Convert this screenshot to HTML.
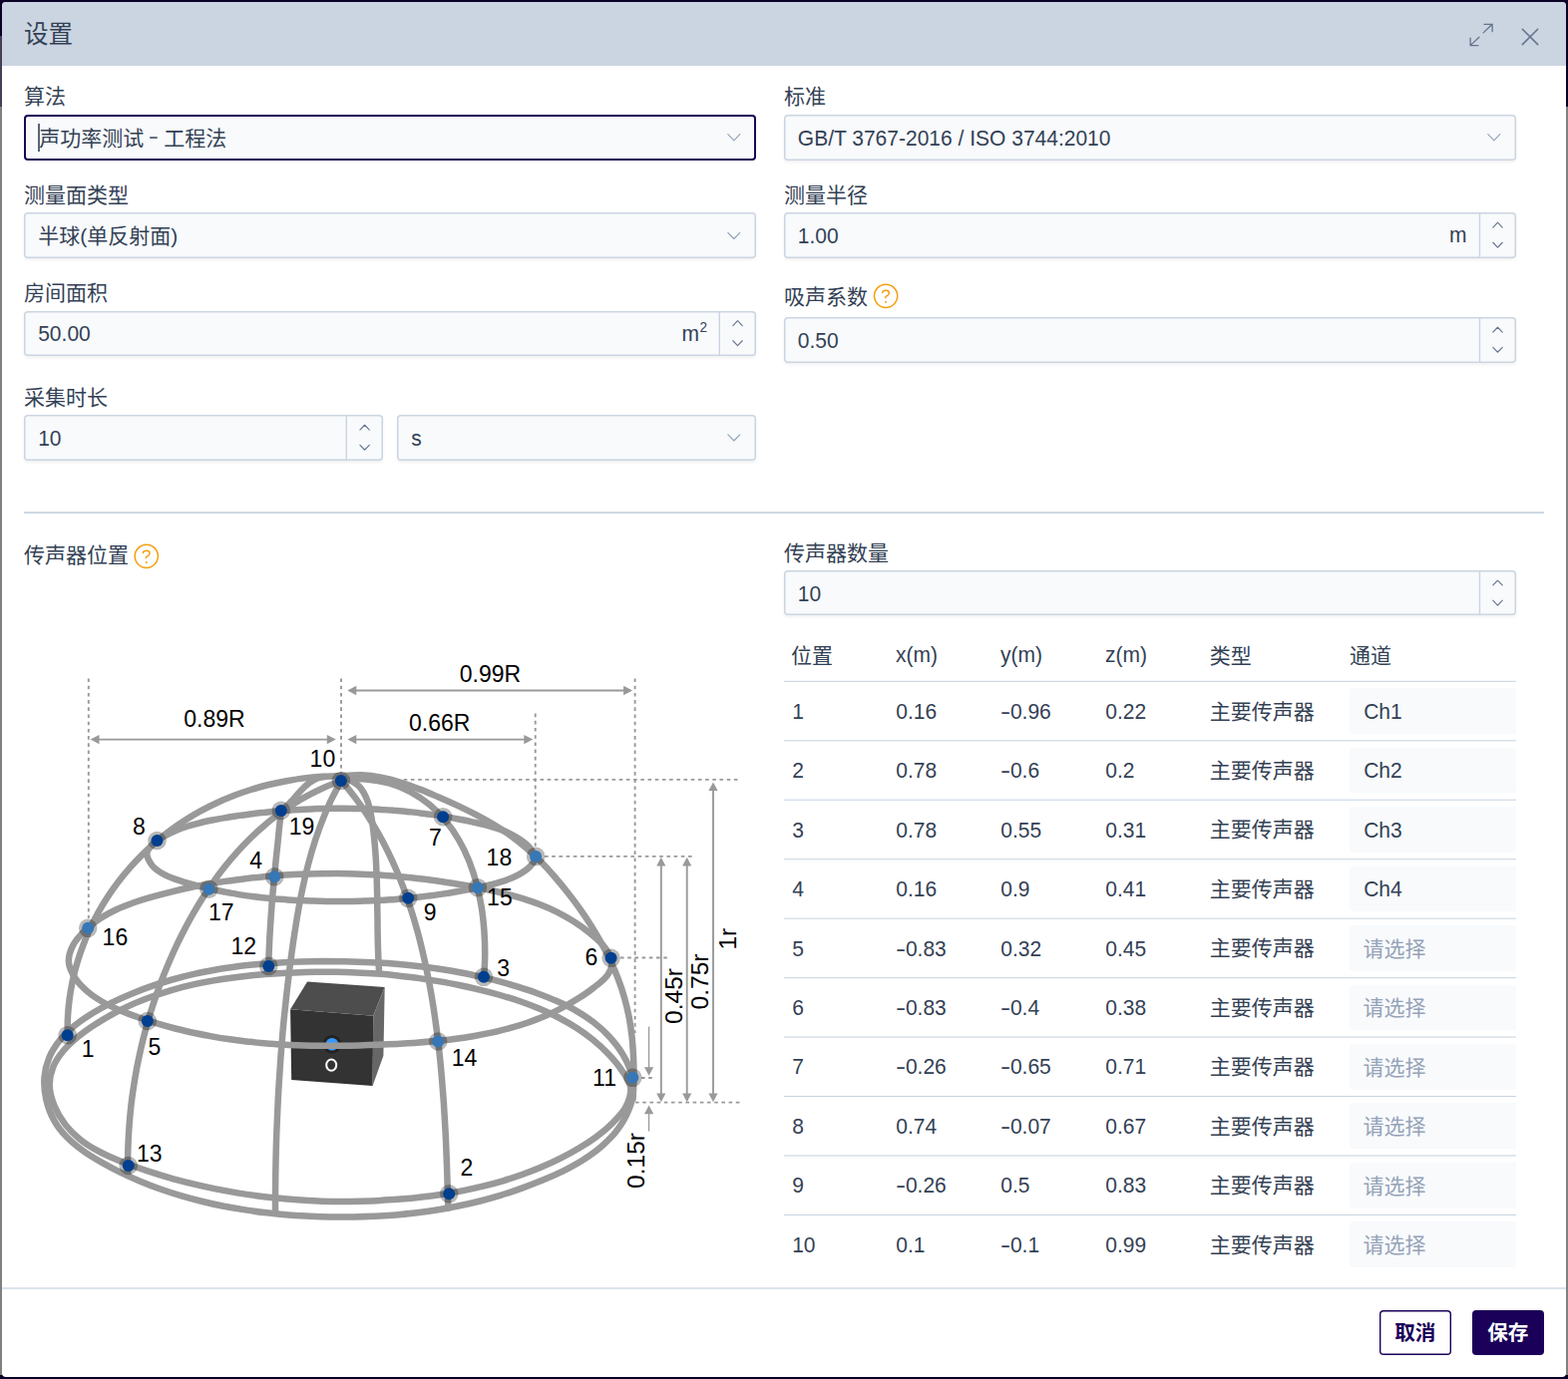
<!DOCTYPE html>
<html lang="zh-CN"><head><meta charset="utf-8"><title>设置</title>
<style>
*{box-sizing:border-box;margin:0;padding:0}
html,body{width:1572px;height:1383px;overflow:hidden}
body{position:relative;background:#808080;font-family:"Liberation Sans",sans-serif;color:#334155}
.bk{position:absolute;background:#0a0226}
#dlg{position:absolute;left:2px;top:2px;width:1568px;height:1379px;background:#fff;border-radius:4px;overflow:hidden}
#hdr{position:absolute;left:0;top:0;width:1568px;height:63.8px;background:#cbd5e1}
#pg{position:absolute;left:0;top:0;width:1572px;height:1383px}
.zh{position:absolute;white-space:nowrap;line-height:1.16;overflow:visible;font-family:"Liberation Sans","Noto Sans CJK SC",sans-serif}
.zh span{position:absolute;left:0;top:-0.045em;white-space:nowrap}
.zh.bd{font-weight:bold}
.tx{position:absolute;white-space:nowrap;line-height:1.117;transform:scaleY(1.05);transform-origin:0 81%}
.mn{display:inline-block;transform:scaleX(1.45);transform-origin:0 50%;margin-right:2.6px}
.sup{font-size:13.5px;position:relative;top:-8.6px;margin-left:0.5px}
.inp{position:absolute;background:#f8fafc;border-radius:4px;box-shadow:inset 0 0 0 1.5px #cbd5e1,0 1.5px 3px rgba(18,18,23,.06)}
.inp.foc{box-shadow:inset 0 0 0 2px #1a0058}
.hr{position:absolute;height:1.4px;background:#cbd5e1}
.hr2{position:absolute;height:1.3px;background:#cbd5e1}
.tl{position:absolute;left:786px;width:734px;height:1.3px;background:#cbd5e1}
.ch{position:absolute;left:1353.2px;width:166.8px;height:45.8px;background:#f8fafc;border-radius:4px 0 0 4px}
.btn{position:absolute;width:72px;height:45px;border-radius:4px}
.b1{background:#fff;box-shadow:inset 0 0 0 1.4px #1a0058}
.b2{background:#1a0058}
#ov{position:absolute;left:0;top:0;overflow:visible}
</style></head>
<body>
<div class="bk" style="left:0;top:0;width:1572px;height:4px"></div>
<div class="bk" style="left:0;top:0;width:4px;height:36px"></div>
<div class="bk" style="left:0;top:36px;width:4px;height:71px;background:#453f58"></div>
<div class="bk" style="left:1568px;top:0;width:4px;height:107px"></div>
<div class="bk" style="left:0;top:1379px;width:1572px;height:4px"></div>
<div id="dlg"><div id="hdr"></div></div>
<div id="pg">
<div class="zh " style="left:24px;top:22px;width:49px;height:28.42px;font-size:24.5px;color:#334155"><span>设置</span></div>
<div class="zh " style="left:24px;top:86.36px;width:42px;height:24.36px;font-size:21px;color:#334155"><span>算法</span></div>
<div class="inp foc" style="left:24px;top:115px;width:734px;height:45.7px"></div>
<div class="zh " style="left:39.2px;top:127.46px;width:105px;height:24.36px;font-size:21px;color:#334155"><span>声功率测试</span></div>
<div class="tx" style="left:149px;top:127px;font-size:21px;color:transparent;">-</div>
<div class="zh " style="left:164.3px;top:127.46px;width:63px;height:24.36px;font-size:21px;color:#334155"><span>工程法</span></div>
<div class="zh " style="left:786px;top:86.36px;width:42px;height:24.36px;font-size:21px;color:#334155"><span>标准</span></div>
<div class="inp" style="left:786px;top:115px;width:734px;height:45.7px"></div>
<div class="tx" style="left:799.8px;top:127px;font-size:21px;color:#334155;">GB/T 3767-2016 / ISO 3744:2010</div>
<div class="zh " style="left:24px;top:184.66px;width:105px;height:24.36px;font-size:21px;color:#334155"><span>测量面类型</span></div>
<div class="inp" style="left:24px;top:213.1px;width:734px;height:45.7px"></div>
<div class="zh " style="left:38.3px;top:225.86px;width:140.2px;height:24.36px;font-size:21px;color:#334155"><span>半球(单反射面)</span></div>
<div class="zh " style="left:786px;top:184.66px;width:84px;height:24.36px;font-size:21px;color:#334155"><span>测量半径</span></div>
<div class="inp" style="left:786px;top:213.1px;width:734px;height:45.7px"></div>
<div class="tx" style="left:799.8px;top:224.69px;font-size:21px;color:#334155;">1.00</div>
<div class="tx" style="right:101.5px;top:224.19px;font-size:21px;color:#334155">m</div>
<div class="zh " style="left:24px;top:283.06px;width:84px;height:24.36px;font-size:21px;color:#334155"><span>房间面积</span></div>
<div class="inp" style="left:24px;top:311.6px;width:734px;height:45.7px"></div>
<div class="tx" style="left:38.2px;top:323.19px;font-size:21px;color:#334155;">50.00</div>
<div class="tx" style="right:863px;top:322.6px;font-size:21px;color:#334155">m<span class="sup">2</span></div>
<div class="zh " style="left:786px;top:286.86px;width:84px;height:24.36px;font-size:21px;color:#334155"><span>吸声系数</span></div>
<div class="inp" style="left:786px;top:318.2px;width:734px;height:45.7px"></div>
<div class="tx" style="left:799.8px;top:329.8px;font-size:21px;color:#334155;">0.50</div>
<div class="zh " style="left:24px;top:387.96px;width:84px;height:24.36px;font-size:21px;color:#334155"><span>采集时长</span></div>
<div class="inp" style="left:24px;top:416.2px;width:359.6px;height:45.7px"></div>
<div class="tx" style="left:38.2px;top:427.8px;font-size:21px;color:#334155;">10</div>
<div class="inp" style="left:398.3px;top:416.2px;width:359.7px;height:45.7px"></div>
<div class="tx" style="left:412.3px;top:427.6px;font-size:21px;color:#334155;">s</div>
<div class="zh " style="left:24px;top:546.26px;width:105px;height:24.36px;font-size:21px;color:#334155"><span>传声器位置</span></div>
<div class="zh " style="left:786px;top:543.76px;width:105px;height:24.36px;font-size:21px;color:#334155"><span>传声器数量</span></div>
<div class="inp" style="left:786px;top:572.2px;width:734px;height:44.9px"></div>
<div class="tx" style="left:799.8px;top:583.6px;font-size:21px;color:#334155;">10</div>
<div class="zh " style="left:792.9px;top:646.66px;width:42px;height:24.36px;font-size:21px;color:#334155"><span>位置</span></div>
<div class="tx" style="left:898px;top:645.29px;font-size:21px;color:#334155;">x(m)</div>
<div class="tx" style="left:1003px;top:645.29px;font-size:21px;color:#334155;">y(m)</div>
<div class="tx" style="left:1108px;top:645.29px;font-size:21px;color:#334155;">z(m)</div>
<div class="zh " style="left:1212.8px;top:646.66px;width:42px;height:24.36px;font-size:21px;color:#334155"><span>类型</span></div>
<div class="zh " style="left:1353.1px;top:646.66px;width:42px;height:24.36px;font-size:21px;color:#334155"><span>通道</span></div>
<div class="ch" style="top:690.23px"></div>
<div class="tx" style="left:794.2px;top:701.73px;font-size:21px;color:#334155;">1</div>
<div class="tx" style="left:898.3px;top:701.73px;font-size:21px;color:#334155;">0.16</div>
<div class="tx" style="left:1003.3px;top:701.73px;font-size:21px;color:#334155;"><span class="mn">-</span>0.96</div>
<div class="tx" style="left:1108.3px;top:701.73px;font-size:21px;color:#334155;">0.22</div>
<div class="zh " style="left:1212.8px;top:702.49px;width:105px;height:24.36px;font-size:21px;color:#334155"><span>主要传声器</span></div>
<div class="tx" style="left:1367.2px;top:701.73px;font-size:21px;color:#334155;">Ch1</div>
<div class="ch" style="top:749.69px"></div>
<div class="tx" style="left:794.2px;top:761.18px;font-size:21px;color:#334155;">2</div>
<div class="tx" style="left:898.3px;top:761.18px;font-size:21px;color:#334155;">0.78</div>
<div class="tx" style="left:1003.3px;top:761.18px;font-size:21px;color:#334155;"><span class="mn">-</span>0.6</div>
<div class="tx" style="left:1108.3px;top:761.18px;font-size:21px;color:#334155;">0.2</div>
<div class="zh " style="left:1212.8px;top:761.95px;width:105px;height:24.36px;font-size:21px;color:#334155"><span>主要传声器</span></div>
<div class="tx" style="left:1367.2px;top:761.18px;font-size:21px;color:#334155;">Ch2</div>
<div class="ch" style="top:809.15px"></div>
<div class="tx" style="left:794.2px;top:820.64px;font-size:21px;color:#334155;">3</div>
<div class="tx" style="left:898.3px;top:820.64px;font-size:21px;color:#334155;">0.78</div>
<div class="tx" style="left:1003.3px;top:820.64px;font-size:21px;color:#334155;">0.55</div>
<div class="tx" style="left:1108.3px;top:820.64px;font-size:21px;color:#334155;">0.31</div>
<div class="zh " style="left:1212.8px;top:821.41px;width:105px;height:24.36px;font-size:21px;color:#334155"><span>主要传声器</span></div>
<div class="tx" style="left:1367.2px;top:820.64px;font-size:21px;color:#334155;">Ch3</div>
<div class="ch" style="top:868.61px"></div>
<div class="tx" style="left:794.2px;top:880.11px;font-size:21px;color:#334155;">4</div>
<div class="tx" style="left:898.3px;top:880.11px;font-size:21px;color:#334155;">0.16</div>
<div class="tx" style="left:1003.3px;top:880.11px;font-size:21px;color:#334155;">0.9</div>
<div class="tx" style="left:1108.3px;top:880.11px;font-size:21px;color:#334155;">0.41</div>
<div class="zh " style="left:1212.8px;top:880.87px;width:105px;height:24.36px;font-size:21px;color:#334155"><span>主要传声器</span></div>
<div class="tx" style="left:1367.2px;top:880.11px;font-size:21px;color:#334155;">Ch4</div>
<div class="ch" style="top:928.07px"></div>
<div class="tx" style="left:794.2px;top:939.57px;font-size:21px;color:#334155;">5</div>
<div class="tx" style="left:898.3px;top:939.57px;font-size:21px;color:#334155;"><span class="mn">-</span>0.83</div>
<div class="tx" style="left:1003.3px;top:939.57px;font-size:21px;color:#334155;">0.32</div>
<div class="tx" style="left:1108.3px;top:939.57px;font-size:21px;color:#334155;">0.45</div>
<div class="zh " style="left:1212.8px;top:940.33px;width:105px;height:24.36px;font-size:21px;color:#334155"><span>主要传声器</span></div>
<div class="zh " style="left:1366.5px;top:940.73px;width:63px;height:24.36px;font-size:21px;color:#94a3b8"><span>请选择</span></div>
<div class="ch" style="top:987.53px"></div>
<div class="tx" style="left:794.2px;top:999.03px;font-size:21px;color:#334155;">6</div>
<div class="tx" style="left:898.3px;top:999.03px;font-size:21px;color:#334155;"><span class="mn">-</span>0.83</div>
<div class="tx" style="left:1003.3px;top:999.03px;font-size:21px;color:#334155;"><span class="mn">-</span>0.4</div>
<div class="tx" style="left:1108.3px;top:999.03px;font-size:21px;color:#334155;">0.38</div>
<div class="zh " style="left:1212.8px;top:999.79px;width:105px;height:24.36px;font-size:21px;color:#334155"><span>主要传声器</span></div>
<div class="zh " style="left:1366.5px;top:1000.19px;width:63px;height:24.36px;font-size:21px;color:#94a3b8"><span>请选择</span></div>
<div class="ch" style="top:1046.99px"></div>
<div class="tx" style="left:794.2px;top:1058.48px;font-size:21px;color:#334155;">7</div>
<div class="tx" style="left:898.3px;top:1058.48px;font-size:21px;color:#334155;"><span class="mn">-</span>0.26</div>
<div class="tx" style="left:1003.3px;top:1058.48px;font-size:21px;color:#334155;"><span class="mn">-</span>0.65</div>
<div class="tx" style="left:1108.3px;top:1058.48px;font-size:21px;color:#334155;">0.71</div>
<div class="zh " style="left:1212.8px;top:1059.25px;width:105px;height:24.36px;font-size:21px;color:#334155"><span>主要传声器</span></div>
<div class="zh " style="left:1366.5px;top:1059.65px;width:63px;height:24.36px;font-size:21px;color:#94a3b8"><span>请选择</span></div>
<div class="ch" style="top:1106.45px"></div>
<div class="tx" style="left:794.2px;top:1117.94px;font-size:21px;color:#334155;">8</div>
<div class="tx" style="left:898.3px;top:1117.94px;font-size:21px;color:#334155;">0.74</div>
<div class="tx" style="left:1003.3px;top:1117.94px;font-size:21px;color:#334155;"><span class="mn">-</span>0.07</div>
<div class="tx" style="left:1108.3px;top:1117.94px;font-size:21px;color:#334155;">0.67</div>
<div class="zh " style="left:1212.8px;top:1118.71px;width:105px;height:24.36px;font-size:21px;color:#334155"><span>主要传声器</span></div>
<div class="zh " style="left:1366.5px;top:1119.11px;width:63px;height:24.36px;font-size:21px;color:#94a3b8"><span>请选择</span></div>
<div class="ch" style="top:1165.91px"></div>
<div class="tx" style="left:794.2px;top:1177.4px;font-size:21px;color:#334155;">9</div>
<div class="tx" style="left:898.3px;top:1177.4px;font-size:21px;color:#334155;"><span class="mn">-</span>0.26</div>
<div class="tx" style="left:1003.3px;top:1177.4px;font-size:21px;color:#334155;">0.5</div>
<div class="tx" style="left:1108.3px;top:1177.4px;font-size:21px;color:#334155;">0.83</div>
<div class="zh " style="left:1212.8px;top:1178.17px;width:105px;height:24.36px;font-size:21px;color:#334155"><span>主要传声器</span></div>
<div class="zh " style="left:1366.5px;top:1178.57px;width:63px;height:24.36px;font-size:21px;color:#94a3b8"><span>请选择</span></div>
<div class="ch" style="top:1225.37px"></div>
<div class="tx" style="left:794.2px;top:1236.86px;font-size:21px;color:#334155;">10</div>
<div class="tx" style="left:898.3px;top:1236.86px;font-size:21px;color:#334155;">0.1</div>
<div class="tx" style="left:1003.3px;top:1236.86px;font-size:21px;color:#334155;"><span class="mn">-</span>0.1</div>
<div class="tx" style="left:1108.3px;top:1236.86px;font-size:21px;color:#334155;">0.99</div>
<div class="zh " style="left:1212.8px;top:1237.63px;width:105px;height:24.36px;font-size:21px;color:#334155"><span>主要传声器</span></div>
<div class="zh " style="left:1366.5px;top:1238.03px;width:63px;height:24.36px;font-size:21px;color:#94a3b8"><span>请选择</span></div>
<div class="btn b1" style="left:1383px;top:1314px"></div>
<div class="zh bd" style="left:1398.2px;top:1326.06px;width:41.2px;height:23.9px;font-size:20.6px;color:#1a0058"><span>取消</span></div>
<div class="btn b2" style="left:1476px;top:1314px"></div>
<div class="zh bd" style="left:1491.2px;top:1326.06px;width:41.2px;height:23.9px;font-size:20.6px;color:#ffffff"><span>保存</span></div>
<svg id="dg" width="1572" height="1383" viewBox="0 0 1572 1383" style="position:absolute;left:0;top:0" font-family="'Liberation Sans',sans-serif"><path d="M88.8 680.5 L88.8 921" stroke="#999999" stroke-width="1.9" stroke-dasharray="3.6 3.6" fill="none"/><path d="M342 680.5 L342 776" stroke="#999999" stroke-width="1.9" stroke-dasharray="3.6 3.6" fill="none"/><path d="M636.6 680.5 L636.6 1036" stroke="#999999" stroke-width="1.9" stroke-dasharray="3.6 3.6" fill="none"/><path d="M536.7 715.6 L536.7 850" stroke="#999999" stroke-width="1.9" stroke-dasharray="3.6 3.6" fill="none"/><path d="M397.5 781.9 L741.5 781.9" stroke="#999999" stroke-width="1.9" stroke-dasharray="3.6 3.6" fill="none"/><path d="M546 858.9 L694 858.9" stroke="#999999" stroke-width="1.9" stroke-dasharray="3.6 3.6" fill="none"/><path d="M622 960.5 L671.5 960.5" stroke="#999999" stroke-width="1.9" stroke-dasharray="3.6 3.6" fill="none"/><path d="M637 1105.6 L741.5 1105.6" stroke="#999999" stroke-width="1.9" stroke-dasharray="3.6 3.6" fill="none"/><path d="M643 1081 L656 1081" stroke="#999999" stroke-width="1.9" stroke-dasharray="3.6 3.6" fill="none"/><path d="M356.3 692.5 H626.1" stroke="#999999" stroke-width="1.9" fill="none"/><path d="M348.3 692.5 L357.3 687.8 L357.3 697.2 Z" fill="#999999"/><path d="M634.1 692.5 L625.1 687.8 L625.1 697.2 Z" fill="#999999"/><path d="M98.5 741.6 H328.8" stroke="#999999" stroke-width="1.9" fill="none"/><path d="M90.5 741.6 L99.5 736.9 L99.5 746.3 Z" fill="#999999"/><path d="M336.8 741.6 L327.8 736.9 L327.8 746.3 Z" fill="#999999"/><path d="M356.3 741.6 H526.3" stroke="#999999" stroke-width="1.9" fill="none"/><path d="M348.3 741.6 L357.3 736.9 L357.3 746.3 Z" fill="#999999"/><path d="M534.3 741.6 L525.3 736.9 L525.3 746.3 Z" fill="#999999"/><path d="M662.8 867.4 V1097.6" stroke="#999999" stroke-width="1.9" fill="none"/><path d="M662.8 859.8 L658.2 868.4 L667.4 868.4 Z" fill="#999999"/><path d="M662.8 1105.2 L658.2 1096.6 L667.4 1096.6 Z" fill="#999999"/><path d="M688.7 867.4 V1097.6" stroke="#999999" stroke-width="1.9" fill="none"/><path d="M688.7 859.8 L684.1 868.4 L693.3 868.4 Z" fill="#999999"/><path d="M688.7 1105.2 L684.1 1096.6 L693.3 1096.6 Z" fill="#999999"/><path d="M715 792 V1097.6" stroke="#999999" stroke-width="1.9" fill="none"/><path d="M715 784.4 L710.4 793 L719.6 793 Z" fill="#999999"/><path d="M715 1105.2 L710.4 1096.6 L719.6 1096.6 Z" fill="#999999"/><path d="M650.6 1029.6 V1071.2" stroke="#999999" stroke-width="1.3" fill="none"/><path d="M650.6 1078.8 L646 1070.2 L655.2 1070.2 Z" fill="#999999"/><path d="M650.6 1116.2 V1134.5" stroke="#999999" stroke-width="1.3" fill="none"/><path d="M650.6 1108.6 L646 1117.2 L655.2 1117.2 Z" fill="#999999"/><path d="M291.1 1012.3 L374.2 1018.7 L373.6 1088.9 L292.2 1083 Z" fill="#333"/><path d="M308.1 984.6 L385.7 990.1 L374.2 1018.7 L291.1 1012.3 Z" fill="#4d4d4d"/><path d="M374.2 1018.7 L385.7 990.1 L384.4 1058.8 L373.6 1088.9 Z" fill="#676767"/><circle cx="332.9" cy="1047.3" r="9.3" fill="#222"/><circle cx="332.9" cy="1047.3" r="6.3" fill="#3399ff"/><ellipse cx="332.2" cy="1068.1" rx="5" ry="5.6" fill="none" stroke="#fff" stroke-width="2"/><text x="332.3" y="1074.2" font-size="23" fill="none" text-anchor="middle">o</text><g fill="none" stroke="#999999" stroke-width="6.5" stroke-linecap="round" stroke-linejoin="round"><path d="M44.5 1080.6C45 1073.8 46.7 1067 49.3 1060.8C51.8 1054.7 55.6 1048.9 59.7 1043.6C64 1038.2 69.2 1033.4 74.6 1028.8C80.1 1024.2 86.3 1020.1 92.6 1016.2C98.9 1012.3 105.7 1008.7 112.4 1005.4C119.2 1002.1 126.1 999 133 996.2C139.8 993.4 146.7 990.8 153.7 988.4C160.6 986.1 167.5 983.9 174.5 982C181.4 980 188.4 978.3 195.5 976.7C202.5 975.1 209.5 973.8 216.6 972.5C223.6 971.3 230.7 970.3 237.8 969.3C244.9 968.4 252 967.7 259.1 967C266.2 966.4 273.3 965.9 280.5 965.4C287.6 965 294.8 964.7 302 964.5C309.2 964.3 316.3 964.2 323.5 964.1C330.7 964.1 337.9 964.1 345.2 964.2C352.4 964.4 359.6 964.6 366.8 964.9C374 965.2 381.2 965.6 388.4 966.1C395.6 966.6 402.9 967.2 410 968C417.2 968.7 424.4 969.5 431.6 970.5C438.8 971.5 445.9 972.6 453 973.8C460.2 975.1 467.3 976.4 474.4 978C481.5 979.5 488.5 981.1 495.6 982.9C502.6 984.8 509.6 986.7 516.6 988.8C523.5 991 530.5 993.2 537.4 995.7C544.2 998.2 551.1 1000.8 557.7 1003.8C564.3 1006.7 570.9 1009.8 577.1 1013.4C583.4 1017 589.4 1020.9 595.1 1025.3C600.7 1029.6 606.1 1034.4 611 1039.7C615.8 1045 620.5 1050.9 624.2 1057.2C627.9 1063.5 631.5 1070.4 633.2 1077.3C634.8 1084.1 635.3 1091.5 634.4 1098.3C633.6 1105.1 631.1 1112 628.1 1118.2C625.2 1124.5 621.2 1130.4 616.9 1135.8C612.5 1141.2 607.3 1146.1 601.9 1150.7C596.5 1155.4 590.4 1159.5 584.2 1163.4C578 1167.4 571.3 1170.9 564.7 1174.3C557.9 1177.6 551 1180.7 544.1 1183.6C537.2 1186.5 530.2 1189.1 523.2 1191.6C516.3 1194.1 509.4 1196.5 502.4 1198.6C495.4 1200.7 488.4 1202.7 481.4 1204.5C474.4 1206.3 467.4 1207.9 460.4 1209.3C453.4 1210.8 446.4 1212.1 439.3 1213.2C432.3 1214.4 425.2 1215.4 418.2 1216.3C411.1 1217.1 404 1217.8 396.9 1218.4C389.8 1219 382.7 1219.5 375.5 1219.8C368.4 1220.1 361.3 1220.3 354.1 1220.4C346.9 1220.5 339.7 1220.5 332.5 1220.4C325.3 1220.3 318.1 1220.1 310.9 1219.7C303.7 1219.4 296.4 1218.9 289.2 1218.4C281.9 1217.8 274.7 1217.1 267.5 1216.3C260.3 1215.5 253 1214.5 245.9 1213.4C238.7 1212.3 231.5 1211.1 224.4 1209.7C217.2 1208.3 210.1 1206.8 203.1 1205C196 1203.3 189 1201.5 182.1 1199.4C175.1 1197.4 168.2 1195.2 161.4 1192.8C154.6 1190.4 147.8 1187.8 141.2 1185C134.5 1182.2 127.9 1179.2 121.4 1176.1C114.8 1172.9 108.4 1169.5 102.1 1165.9C95.8 1162.3 89.5 1158.6 83.6 1154.4C77.8 1150.2 72 1145.7 67.1 1140.6C62.2 1135.5 57.6 1129.8 54.2 1123.6C50.6 1117.2 47.9 1109.8 46.3 1102.7C44.7 1095.5 43.9 1087.7 44.5 1080.6Z"/><path d="M49.7 1089.1C49.5 1082.8 50.8 1076.3 53.1 1070.5C55.3 1064.5 59.3 1059 63.4 1054C67.7 1048.7 73.1 1044 78.5 1039.5C83.9 1034.9 90 1030.8 96.1 1026.9C102.1 1023.1 108.3 1019.5 114.5 1016.1C120.7 1012.8 127.1 1009.8 133.5 1006.9C139.8 1004.1 146.3 1001.6 152.9 999.2C159.4 996.9 166 994.8 172.6 992.8C179.3 990.9 186 989.2 192.7 987.7C199.4 986.1 206.2 984.8 213 983.6C219.8 982.4 226.7 981.4 233.6 980.5C240.4 979.6 247.3 978.8 254.2 978.1C261.1 977.5 268 976.9 274.9 976.5C281.7 976 288.6 975.7 295.5 975.4C302.4 975.1 309.3 974.9 316.2 974.8C323.1 974.7 329.9 974.7 336.8 974.8C343.7 974.9 350.6 975.1 357.4 975.4C364.3 975.7 371.2 976.1 378 976.6C384.9 977.1 391.8 977.7 398.6 978.4C405.5 979.1 412.3 980 419.2 980.9C426 981.9 432.9 982.9 439.7 984.1C446.6 985.3 453.4 986.5 460.3 988C467.1 989.4 474 990.9 480.8 992.6C487.6 994.2 494.5 996 501.3 998C508 999.9 514.8 1002 521.5 1004.3C528.1 1006.6 534.7 1009.1 541.1 1011.8C547.5 1014.5 553.9 1017.4 560 1020.5C566.1 1023.7 572.1 1027.1 577.8 1030.8C583.6 1034.5 589.1 1038.5 594.4 1042.8C599.7 1047.1 604.7 1051.6 609.4 1056.6C614.1 1061.5 618.8 1066.8 622.6 1072.4C626.4 1078 631.4 1084.1 632.2 1090.4C633 1096.5 630.5 1103.7 627.6 1109.6C624.5 1115.9 618.6 1121.5 613.6 1126.7C608.6 1131.7 603.1 1136.1 597.5 1140.3C591.9 1144.5 586 1148.2 580 1151.7C574.1 1155.2 568 1158.5 561.9 1161.6C555.7 1164.7 549.5 1167.6 543.2 1170.3C536.8 1173 530.4 1175.5 524 1177.8C517.5 1180.1 510.9 1182.3 504.3 1184.3C497.7 1186.2 491 1188 484.3 1189.7C477.6 1191.3 470.9 1192.8 464.1 1194.1C457.2 1195.5 450.4 1196.7 443.5 1197.7C436.7 1198.8 429.8 1199.7 422.8 1200.5C415.9 1201.3 409 1202 402 1202.6C395.1 1203.1 388.2 1203.6 381.2 1203.9C374.3 1204.3 367.3 1204.5 360.4 1204.7C353.4 1204.9 346.5 1204.9 339.6 1204.9C332.7 1204.8 325.7 1204.7 318.8 1204.4C311.9 1204.2 305 1203.8 298.1 1203.3C291.3 1202.9 284.4 1202.3 277.5 1201.6C270.7 1200.9 263.8 1200.1 257 1199.2C250.1 1198.3 243.3 1197.3 236.5 1196.1C229.7 1195 222.9 1193.8 216.2 1192.4C209.4 1191 202.6 1189.5 195.9 1187.9C189.2 1186.3 182.5 1184.6 175.8 1182.8C169.1 1180.9 162.5 1178.9 155.8 1176.9C149.2 1174.8 142.6 1172.6 136 1170.2C129.4 1167.9 122.8 1165.5 116.4 1162.8C110 1160.1 103.5 1157.3 97.5 1153.9C91.5 1150.6 85.6 1147 80.3 1142.7C75 1138.4 69.9 1133.6 65.7 1128.1C61.3 1122.5 57.3 1116 54.7 1109.5C52.1 1103 49.9 1095.8 49.7 1089.1Z"/><path d="M68.9 964.8C68.5 959.4 70.5 953.4 73.1 948.3C75.8 942.8 80.6 937.8 85.1 933.3C89.6 928.8 94.9 924.9 100.2 921.3C105.4 917.8 111 914.9 116.6 912.2C122.2 909.5 128.1 907.3 134 905.2C139.9 903.1 145.9 901.3 152 899.6C158 897.9 164.1 896.3 170.2 894.8C176.2 893.2 182.4 891.8 188.5 890.5C194.6 889.2 200.8 888 207 886.9C213.1 885.8 219.3 884.8 225.5 883.9C231.7 883 237.9 882.1 244.2 881.4C250.4 880.6 256.6 880 262.8 879.4C269.1 878.8 275.3 878.3 281.5 877.8C287.8 877.4 294 877.1 300.2 876.8C306.5 876.5 312.7 876.3 319 876.2C325.2 876.1 331.5 876.1 337.7 876.1C343.9 876.2 350.2 876.3 356.4 876.5C362.7 876.7 368.9 876.9 375.1 877.3C381.4 877.7 387.6 878.1 393.8 878.6C400 879.1 406.3 879.7 412.5 880.3C418.7 881 424.9 881.7 431.1 882.5C437.3 883.3 443.5 884.2 449.7 885.2C455.9 886.1 462.1 887.2 468.2 888.3C474.4 889.4 480.6 890.5 486.7 891.8C492.9 893.1 499 894.4 505.1 895.9C511.2 897.4 517.3 899.1 523.2 900.9C529.2 902.8 535.2 904.8 541 907.1C546.9 909.4 552.7 911.9 558.3 914.7C564 917.6 569.6 920.7 575 924.1C580.5 927.6 585.9 931.4 591 935.6C596.1 939.8 601.7 944.3 605.6 949.3C609.1 953.8 613.2 959 613.6 964C614.1 968.6 611.8 973.8 609 978C605.9 982.8 600 986.7 595.1 990.6C590.2 994.6 584.8 998.2 579.4 1001.6C574.1 1004.9 568.6 1008.1 563.1 1011C557.6 1013.9 551.9 1016.5 546.2 1019C540.5 1021.4 534.6 1023.6 528.8 1025.7C522.9 1027.7 516.9 1029.5 510.9 1031.2C504.9 1032.9 498.8 1034.3 492.7 1035.7C486.6 1037 480.4 1038.2 474.2 1039.3C468 1040.3 461.7 1041.2 455.4 1042C449.1 1042.9 442.8 1043.5 436.5 1044.1C430.2 1044.8 423.9 1045.3 417.5 1045.7C411.2 1046.2 404.8 1046.5 398.5 1046.9C392.2 1047.2 385.8 1047.5 379.5 1047.8C373.2 1048 366.9 1048.2 360.6 1048.4C354.3 1048.6 348.1 1048.7 341.8 1048.7C335.5 1048.8 329.3 1048.8 323.1 1048.8C316.8 1048.7 310.6 1048.6 304.4 1048.4C298.2 1048.2 292 1048 285.8 1047.7C279.6 1047.3 273.4 1046.9 267.3 1046.4C261.1 1045.9 255 1045.3 248.8 1044.7C242.7 1044 236.5 1043.2 230.4 1042.3C224.3 1041.5 218.2 1040.5 212.1 1039.4C206 1038.3 199.9 1037.1 193.8 1035.8C187.7 1034.5 181.6 1033 175.6 1031.5C169.5 1029.9 163.5 1028.2 157.4 1026.4C151.4 1024.5 145.3 1022.6 139.3 1020.5C133.3 1018.4 127.2 1016.2 121.3 1013.7C115.4 1011.2 109.4 1008.6 103.9 1005.5C98.4 1002.3 93 999 88.3 994.9C83.5 990.9 78.7 986.3 75.4 981.1C72.3 976.2 69.2 970.3 68.9 964.8Z"/><path d="M147.3 855.5C147.7 852.1 150.9 848.8 153.6 846C156.5 843.1 160.8 840.9 164.6 838.7C168.4 836.5 172.3 834.7 176.3 833C180.3 831.3 184.4 829.8 188.6 828.5C192.7 827.2 197 826.1 201.2 825C205.4 824 209.7 823.1 214 822.3C218.3 821.4 222.7 820.7 227 820C231.3 819.2 235.6 818.6 240 817.9C244.3 817.3 248.6 816.7 252.9 816.2C257.3 815.6 261.6 815.1 265.9 814.7C270.2 814.2 274.6 813.8 278.9 813.4C283.2 813.1 287.5 812.7 291.9 812.4C296.2 812.1 300.5 811.9 304.8 811.7C309.1 811.5 313.5 811.3 317.8 811.1C322.1 811 326.4 810.9 330.7 810.8C335 810.7 339.3 810.7 343.6 810.7C347.9 810.7 352.2 810.8 356.5 810.9C360.8 810.9 365.1 811.1 369.4 811.2C373.6 811.4 377.9 811.6 382.2 811.9C386.5 812.1 390.8 812.4 395.1 812.8C399.4 813.1 403.7 813.5 408 813.9C412.3 814.4 416.6 814.8 420.9 815.4C425.2 815.9 429.5 816.5 433.9 817.1C438.2 817.7 442.5 818.4 446.8 819.1C451.1 819.9 455.5 820.6 459.8 821.5C464.2 822.3 468.5 823.2 472.8 824.1C477.2 825.1 481.6 826 485.9 827.1C490.2 828.2 494.5 829.4 498.7 830.9C502.8 832.3 507 833.8 510.9 835.8C514.8 837.7 518.6 839.8 522.1 842.4C525.6 844.9 529.5 847.8 531.9 851.1C534.1 854.2 536.8 858 536.5 861.2C536.2 864.3 533 867.4 530.5 869.9C527.8 872.6 524.2 874.8 520.6 876.8C517 878.8 513.1 880.5 509.1 882C505 883.6 500.6 884.8 496.3 886.1C492 887.3 487.5 888.3 483 889.3C478.6 890.3 474.1 891.2 469.7 892.1C465.2 892.9 460.8 893.7 456.4 894.5C452 895.3 447.7 896 443.3 896.6C438.9 897.3 434.6 897.9 430.2 898.4C425.9 899 421.6 899.5 417.3 900C413 900.4 408.7 900.9 404.4 901.2C400.1 901.6 395.8 902 391.5 902.3C387.2 902.5 383 902.8 378.7 903C374.4 903.2 370.1 903.4 365.9 903.5C361.6 903.7 357.3 903.8 353.1 903.9C348.8 903.9 344.5 904 340.3 904C336 904 331.7 903.9 327.4 903.9C323.1 903.8 318.8 903.7 314.5 903.6C310.2 903.5 305.9 903.3 301.6 903.1C297.3 903 293 902.7 288.7 902.4C284.4 902.2 280.1 901.8 275.8 901.5C271.4 901.1 267.1 900.7 262.8 900.2C258.5 899.7 254.2 899.2 249.9 898.6C245.5 898 241.2 897.3 236.9 896.6C232.6 895.9 228.3 895.1 223.9 894.3C219.6 893.5 215.3 892.5 211 891.6C206.7 890.6 202.4 889.5 198.1 888.4C193.8 887.3 189.5 886.1 185.2 884.8C180.9 883.4 176.5 882.2 172.4 880.5C168.4 878.9 164.3 877.3 160.8 874.9C157.3 872.6 153.8 870 151.6 866.7C149.4 863.5 146.9 859 147.3 855.5Z"/><path d="M342 778C335.9 778.2 329.8 778.3 323.7 778.7C317.6 779.1 311.5 779.6 305.4 780.4C299.3 781.1 293.3 782.1 287.2 783.2C281.2 784.3 275.2 785.6 269.2 787C263.3 788.5 257.4 790.2 251.5 792C245.7 793.8 239.9 795.8 234.2 798C228.5 800.2 222.8 802.6 217.3 805.2C211.8 807.7 206.3 810.5 201 813.4C195.6 816.4 190.4 819.5 185.3 822.8C180.1 826.1 175.1 829.6 170.3 833.2C165.4 836.9 160.6 840.7 156 844.7C151.4 848.7 146.9 852.8 142.6 857.1C138.3 861.4 134.1 865.8 130.1 870.4C126.1 875 122.2 879.7 118.5 884.5C114.8 889.4 111.3 894.4 108 899.4C104.7 904.5 101.5 909.8 98.5 915.1C95.6 920.4 92.8 925.9 90.3 931.4C87.7 936.9 85.3 942.6 83.2 948.3C81 954 79.1 959.8 77.4 965.7C75.6 971.5 74.1 977.4 72.8 983.4C71.6 989.4 70.5 995.4 69.7 1001.5C68.9 1007.5 68.3 1013.7 68 1019.8C67.6 1025.9 67.8 1032.1 67.7 1038.2"/><path d="M342 778C348.8 777.8 355.6 777 362.4 777.3C369.1 777.6 375.7 778.5 382.3 779.8C388.9 781 395.4 782.8 401.8 784.8C408.2 786.7 414.6 789.1 421 791.6C427.3 794 433.6 796.8 439.9 799.5C446.2 802.2 452.4 805 458.6 807.9C464.8 810.8 470.9 813.8 476.9 816.9C482.9 820.1 488.9 823.3 494.7 826.8C500.4 830.3 506.1 833.9 511.6 837.8C517 841.7 522.3 845.9 527.4 850.3C532.4 854.7 537.3 859.3 542 864.1C546.8 868.9 551.3 873.9 555.8 879C560.3 884.2 564.6 889.4 568.8 894.7C573.1 900.1 577.2 905.5 581.1 911.1C585 916.6 588.9 922.3 592.5 928.1C596.1 933.8 599.6 939.6 602.8 945.6C606.1 951.5 609.2 957.5 612 963.6C614.9 969.7 617.6 975.9 619.9 982.2C622.3 988.5 624.4 994.8 626.2 1001.3C628 1007.7 629.5 1014.3 630.8 1020.9C632 1027.5 632.9 1034.2 633.7 1041C634.4 1047.7 634.8 1054.5 635.1 1061.3C635.4 1068 635.5 1074.9 635.4 1081.7C635.3 1088.4 634.9 1095.2 634.6 1102"/><path d="M343 782C350.9 781.8 358.9 780.8 366.7 781.4C374.6 782 382.5 783.3 390 785.4C397.4 787.5 404.7 790.5 411.5 794.1C418.3 797.8 424.8 802.2 430.7 807.1C436.6 812 442.1 817.6 447 823.5C451.9 829.4 456.3 835.8 460.1 842.5C464 849.2 467.4 856.3 470.3 863.6C473.2 870.9 475.7 878.5 477.7 886.2C479.8 893.9 481.4 901.8 482.7 909.6C484 917.5 484.8 925.5 485.4 933.4C486 941.3 486.2 949.1 486.2 956.9C486.2 964.5 485.6 972 485.3 979.5"/><path d="M342.5 783C347 788.6 351.7 794.1 356 799.9C360.3 805.6 364.4 811.5 368.2 817.5C372.1 823.5 375.7 829.5 379.2 835.7C382.7 841.9 386 848.2 389.1 854.5C392.2 860.9 395.1 867.3 397.9 873.8C400.6 880.3 403.2 886.9 405.7 893.6C408.1 900.2 410.4 907 412.5 913.7C414.7 920.5 416.7 927.4 418.6 934.2C420.5 941.1 422.2 948.1 423.8 955C425.5 962 427 969 428.4 976.1C429.9 983.1 431.2 990.2 432.4 997.3C433.6 1004.4 434.8 1011.5 435.8 1018.6C436.8 1025.8 437.8 1032.9 438.7 1040.1C439.6 1047.3 440.4 1054.5 441.1 1061.6C441.9 1068.8 442.5 1076 443.1 1083.2C443.7 1090.4 444.3 1097.6 444.8 1104.8C445.3 1112 445.7 1119.2 446.1 1126.4C446.5 1133.5 446.9 1140.7 447.2 1147.9C447.5 1155 447.8 1162.1 448 1169.2C448.3 1176.3 448.5 1183.4 448.7 1190.5C448.9 1197.5 449.1 1204.6 449.3 1211.6"/><path d="M346 779.5C350.7 782.6 356.5 784.8 360.2 788.8C363.8 792.6 366.2 797.6 368.2 802.6C370.3 807.8 371.2 813.6 372.3 819.2C373.4 824.8 374 830.7 374.7 836.5C375.4 842.3 375.9 848.1 376.3 853.8C376.8 859.6 377.1 865.4 377.3 871.2C377.6 877 377.8 882.7 377.9 888.5C378.1 894.3 378.2 900.1 378.2 905.8C378.3 911.6 378.4 917.3 378.5 923.1C378.5 928.8 378.6 934.6 378.7 940.3C378.8 946 379 951.7 379.2 957.4C379.4 963.1 379.7 968.8 380 974.5"/><path d="M342 783C338.1 790.7 333.8 798.3 330.2 806.1C326.6 814 323.4 822 320.4 830.1C317.4 838.2 314.8 846.4 312.4 854.6C310 862.9 307.8 871.3 305.8 879.7C303.9 888.2 302.1 896.7 300.5 905.2C298.9 913.8 297.4 922.4 296.1 931C294.7 939.6 293.5 948.2 292.3 956.9C291.1 965.5 290 974.1 289 982.8C287.9 991.4 287 1000.1 286.1 1008.7C285.1 1017.4 284.3 1026.1 283.5 1034.7C282.8 1043.4 282.1 1052.1 281.4 1060.7C280.8 1069.4 280.2 1078.1 279.7 1086.7C279.1 1095.4 278.7 1104.1 278.3 1112.8C277.9 1121.4 277.5 1130.1 277.2 1138.8C276.9 1147.5 276.7 1156.1 276.5 1164.8C276.3 1173.5 276.2 1182.1 276.1 1190.8C276 1199.5 276 1208.1 276 1216.8"/><path d="M342 783C336.2 785.3 330.3 787.4 324.6 789.9C319 792.4 313.5 795.2 308.1 798.1C302.7 801 297.5 804.1 292.4 807.4C287.3 810.7 282.3 814.1 277.5 817.8C272.7 821.4 268 825.2 263.5 829.2C258.9 833.1 254.5 837.2 250.2 841.5C245.9 845.7 241.7 850.1 237.7 854.6C233.6 859.1 229.7 863.8 225.9 868.6C222.1 873.3 218.4 878.2 214.9 883.2C211.3 888.1 207.9 893.2 204.6 898.4C201.2 903.5 198 908.8 194.9 914.1C191.8 919.4 188.8 924.8 186 930.3C183.1 935.8 180.3 941.3 177.6 946.9C175 952.4 172.4 958.1 170 963.7C167.5 969.4 165.2 975.1 162.9 980.9C160.7 986.6 158.6 992.5 156.5 998.3C154.5 1004.1 152.6 1010 150.8 1015.9C149 1021.8 147.3 1027.7 145.7 1033.7C144.1 1039.7 142.6 1045.7 141.2 1051.7C139.9 1057.7 138.6 1063.7 137.4 1069.7C136.3 1075.8 135.2 1081.8 134.3 1087.9C133.3 1094 132.5 1100.1 131.7 1106.1C131 1112.2 130.4 1118.3 129.9 1124.4C129.4 1130.5 129 1136.6 128.7 1142.6C128.4 1148.7 128.2 1154.8 128.1 1160.9C128 1166.9 128.2 1173 128.2 1179"/><path d="M325.5 779C323.7 779.3 321.9 779.5 320.2 780C318.5 780.5 317 781.1 315.4 781.9C313.9 782.6 312.5 783.5 311.1 784.4C309.8 785.3 308.4 786.4 307.2 787.5C305.9 788.6 304.7 789.8 303.5 791C302.3 792.2 301.1 793.4 300 794.7C298.8 796 297.7 797.3 296.5 798.6C295.4 799.9 294.3 801.3 293.1 802.5C291.9 803.8 290.8 805.1 289.5 806.3C288.3 807.5 287.1 808.7 285.8 809.8C284.5 810.9 283.1 811.9 281.8 812.9"/><path d="M281.8 812.9C281.3 817.6 280.8 822.3 280.3 827.1C279.8 831.8 279.3 836.5 278.9 841.2C278.4 845.9 277.9 850.7 277.4 855.4C276.9 860.1 276.4 864.8 276 869.5C275.5 874.3 275 879 274.6 883.7C274.2 888.5 273.7 893.2 273.3 897.9C272.9 902.6 272.5 907.4 272.2 912.1C271.8 916.8 271.5 921.6 271.2 926.3C270.9 931 270.6 935.8 270.3 940.5C270.1 945.3 269.9 950 269.7 954.8C269.5 959.5 269.4 964.3 269.3 969"/></g><circle cx="341.9" cy="783" r="9.3" fill="#000" fill-opacity=".28"/><circle cx="341.9" cy="783" r="6" fill="#003f8f"/><circle cx="157.5" cy="843" r="9.3" fill="#000" fill-opacity=".28"/><circle cx="157.5" cy="843" r="6" fill="#003f8f"/><circle cx="281.8" cy="812.9" r="9.3" fill="#000" fill-opacity=".28"/><circle cx="281.8" cy="812.9" r="6" fill="#003f8f"/><circle cx="444.1" cy="819.2" r="9.3" fill="#000" fill-opacity=".28"/><circle cx="444.1" cy="819.2" r="6" fill="#003f8f"/><circle cx="409.2" cy="900.8" r="9.3" fill="#000" fill-opacity=".28"/><circle cx="409.2" cy="900.8" r="6" fill="#003f8f"/><circle cx="269.3" cy="968.9" r="9.3" fill="#000" fill-opacity=".28"/><circle cx="269.3" cy="968.9" r="6" fill="#003f8f"/><circle cx="485" cy="979.8" r="9.3" fill="#000" fill-opacity=".28"/><circle cx="485" cy="979.8" r="6" fill="#003f8f"/><circle cx="612.6" cy="960.8" r="9.3" fill="#000" fill-opacity=".28"/><circle cx="612.6" cy="960.8" r="6" fill="#003f8f"/><circle cx="67.7" cy="1038.2" r="9.3" fill="#000" fill-opacity=".28"/><circle cx="67.7" cy="1038.2" r="6" fill="#003f8f"/><circle cx="147.8" cy="1024" r="9.3" fill="#000" fill-opacity=".28"/><circle cx="147.8" cy="1024" r="6" fill="#003f8f"/><circle cx="128.7" cy="1169" r="9.3" fill="#000" fill-opacity=".28"/><circle cx="128.7" cy="1169" r="6" fill="#003f8f"/><circle cx="450.2" cy="1197.3" r="9.3" fill="#000" fill-opacity=".28"/><circle cx="450.2" cy="1197.3" r="6" fill="#003f8f"/><circle cx="275.2" cy="879.3" r="9.3" fill="#000" fill-opacity=".28"/><circle cx="275.2" cy="879.3" r="6" fill="#3677b6"/><circle cx="209.4" cy="891.7" r="9.3" fill="#000" fill-opacity=".28"/><circle cx="209.4" cy="891.7" r="6" fill="#3677b6"/><circle cx="88.2" cy="930.8" r="9.3" fill="#000" fill-opacity=".28"/><circle cx="88.2" cy="930.8" r="6" fill="#3677b6"/><circle cx="478.9" cy="890.2" r="9.3" fill="#000" fill-opacity=".28"/><circle cx="478.9" cy="890.2" r="6" fill="#3677b6"/><circle cx="537.1" cy="858.9" r="9.3" fill="#000" fill-opacity=".28"/><circle cx="537.1" cy="858.9" r="6" fill="#3677b6"/><circle cx="439.2" cy="1044.5" r="9.3" fill="#000" fill-opacity=".28"/><circle cx="439.2" cy="1044.5" r="6" fill="#3677b6"/><circle cx="634.3" cy="1080.8" r="9.3" fill="#000" fill-opacity=".28"/><circle cx="634.3" cy="1080.8" r="6" fill="#3677b6"/><g font-size="23" fill="#000" text-anchor="middle"><text x="323.4" y="769">10</text><text x="139.3" y="837.3">8</text><text x="302.5" y="837.3">19</text><text x="256.6" y="870.7">4</text><text x="221.8" y="923.2">17</text><text x="115.4" y="948">16</text><text x="244.2" y="956.6">12</text><text x="436.4" y="847.8">7</text><text x="500.4" y="867.8">18</text><text x="500.9" y="907.9">15</text><text x="431.2" y="923.2">9</text><text x="504.6" y="978.5">3</text><text x="592.9" y="968">6</text><text x="88.2" y="1060.2">1</text><text x="155" y="1058.2">5</text><text x="149.8" y="1165">13</text><text x="465.5" y="1068.7">14</text><text x="468" y="1178.6">2</text><text x="606" y="1089.4">11</text><text x="491.5" y="683.6">0.99R</text><text x="214.9" y="729.4">0.89R</text><text x="440.7" y="732.7">0.66R</text><text font-size="24.5" transform="translate(683.7 999) rotate(-90)">0.45r</text><text font-size="24.5" transform="translate(709.9 984.5) rotate(-90)">0.75r</text><text font-size="24.5" transform="translate(737.6 941.7) rotate(-90)">1r</text><text font-size="24.5" transform="translate(646 1164) rotate(-90)">0.15r</text></g></svg>
<svg id="ov" width="1572" height="1383" viewBox="0 0 1572 1383"><path d="M1487.1 32.9 L1496.1 24.3 M1487.9 24.3 H1496.1 V31.7 M1482.9 37.3 L1474.1 45.6 M1474.1 38.2 V45.6 H1481.9" fill="none" stroke="#64748b" stroke-width="1.3" stroke-linecap="round" stroke-linejoin="round"/><path d="M1526.3 29.2 L1541.7 44.6 M1541.7 29.2 L1526.3 44.6" fill="none" stroke="#64748b" stroke-width="1.55" stroke-linecap="round"/><rect x="150.2" y="137.3" width="7.5" height="1.5" fill="#334155"/><rect x="38.2" y="124" width="1.6" height="28" fill="#334155"/><path d="M729.8 134.6 L735.8 140.8 L741.8 134.6" fill="none" stroke="#94a3b8" stroke-width="1.15" stroke-linecap="round" stroke-linejoin="round"/><path d="M1491.8 134.6 L1497.8 140.8 L1503.8 134.6" fill="none" stroke="#94a3b8" stroke-width="1.15" stroke-linecap="round" stroke-linejoin="round"/><path d="M729.8 233.3 L735.8 239.5 L741.8 233.3" fill="none" stroke="#94a3b8" stroke-width="1.15" stroke-linecap="round" stroke-linejoin="round"/><rect x="1482.8" y="214.1" width="1.4" height="43.7" fill="#cbd5e1"/><path d="M1496.8 228.05 L1501.5 223.15 L1506.2 228.05" fill="none" stroke="#64748b" stroke-width="1.1" stroke-linecap="round" stroke-linejoin="round"/><path d="M1496.8 243.25 L1501.5 248.15 L1506.2 243.25" fill="none" stroke="#64748b" stroke-width="1.1" stroke-linecap="round" stroke-linejoin="round"/><rect x="720.6" y="312.6" width="1.4" height="43.7" fill="#cbd5e1"/><path d="M734.8 326.55 L739.5 321.65 L744.2 326.55" fill="none" stroke="#64748b" stroke-width="1.1" stroke-linecap="round" stroke-linejoin="round"/><path d="M734.8 341.75 L739.5 346.65 L744.2 341.75" fill="none" stroke="#64748b" stroke-width="1.1" stroke-linecap="round" stroke-linejoin="round"/><circle cx="888.1" cy="296.8" r="11.6" fill="none" stroke="#f59e0b" stroke-width="1.5"/><path d="M884.6 293.5 C884.9 291.8 886.5 291.2 888.1 291.2 C890.1 291.2 891.4 292.4 891.4 293.9 C891.4 296.2 887.9 296.7 887.4 298.6" fill="none" stroke="#f59e0b" stroke-width="1.4" stroke-linecap="round"/><circle cx="888.05" cy="302.9" r="0.98" fill="#f59e0b"/><rect x="1482.8" y="319.2" width="1.4" height="43.7" fill="#cbd5e1"/><path d="M1496.8 333.15 L1501.5 328.25 L1506.2 333.15" fill="none" stroke="#64748b" stroke-width="1.1" stroke-linecap="round" stroke-linejoin="round"/><path d="M1496.8 348.35 L1501.5 353.25 L1506.2 348.35" fill="none" stroke="#64748b" stroke-width="1.1" stroke-linecap="round" stroke-linejoin="round"/><rect x="346.6" y="417.2" width="1.4" height="43.7" fill="#cbd5e1"/><path d="M360.9 431.15 L365.6 426.25 L370.3 431.15" fill="none" stroke="#64748b" stroke-width="1.1" stroke-linecap="round" stroke-linejoin="round"/><path d="M360.9 446.35 L365.6 451.25 L370.3 446.35" fill="none" stroke="#64748b" stroke-width="1.1" stroke-linecap="round" stroke-linejoin="round"/><path d="M729.8 435.8 L735.8 442 L741.8 435.8" fill="none" stroke="#94a3b8" stroke-width="1.15" stroke-linecap="round" stroke-linejoin="round"/><rect x="24" y="513.2" width="1524" height="1.9" fill="#cbd5e1"/><circle cx="146.8" cy="557.8" r="11.6" fill="none" stroke="#f59e0b" stroke-width="1.5"/><path d="M143.3 554.5 C143.6 552.8 145.2 552.2 146.8 552.2 C148.8 552.2 150.1 553.4 150.1 554.9 C150.1 557.2 146.6 557.7 146.1 559.6" fill="none" stroke="#f59e0b" stroke-width="1.4" stroke-linecap="round"/><circle cx="146.75" cy="563.9" r="0.98" fill="#f59e0b"/><rect x="1482.8" y="573" width="1.4" height="42.9" fill="#cbd5e1"/><path d="M1496.8 586.95 L1501.5 582.05 L1506.2 586.95" fill="none" stroke="#64748b" stroke-width="1.1" stroke-linecap="round" stroke-linejoin="round"/><path d="M1496.8 602.15 L1501.5 607.05 L1506.2 602.15" fill="none" stroke="#64748b" stroke-width="1.1" stroke-linecap="round" stroke-linejoin="round"/><rect x="786" y="682.78" width="734" height="1.1" fill="#cbd5e1"/><rect x="786" y="742.24" width="734" height="1.1" fill="#cbd5e1"/><rect x="786" y="801.7" width="734" height="1.1" fill="#cbd5e1"/><rect x="786" y="861.16" width="734" height="1.1" fill="#cbd5e1"/><rect x="786" y="920.62" width="734" height="1.1" fill="#cbd5e1"/><rect x="786" y="980.08" width="734" height="1.1" fill="#cbd5e1"/><rect x="786" y="1039.54" width="734" height="1.1" fill="#cbd5e1"/><rect x="786" y="1099" width="734" height="1.1" fill="#cbd5e1"/><rect x="786" y="1158.46" width="734" height="1.1" fill="#cbd5e1"/><rect x="786" y="1217.92" width="734" height="1.1" fill="#cbd5e1"/><rect x="2" y="1291.4" width="1568" height="1.3" fill="#cbd5e1"/></svg>
</div>
</body></html>
